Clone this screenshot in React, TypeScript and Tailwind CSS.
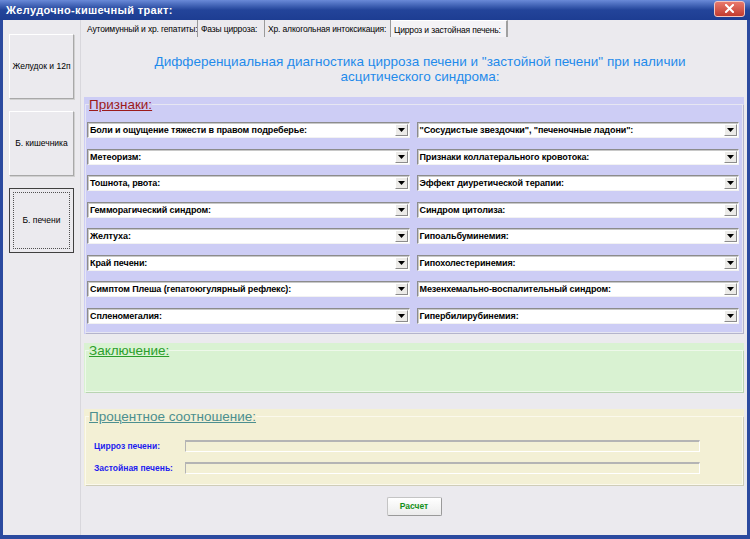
import React from 'react';

const leftSigns = [
  'Боли и ощущение тяжести в правом подреберье:',
  'Метеоризм:',
  'Тошнота, рвота:',
  'Гемморагический синдром:',
  'Желтуха:',
  'Край печени:',
  'Симптом Плеша (гепатоюгулярный рефлекс):',
  'Спленомегалия:',
];

const rightSigns = [
  '"Сосудистые звездочки", "печеночные ладони":',
  'Признаки коллатерального кровотока:',
  'Эффект диуретической терапии:',
  'Синдром цитолиза:',
  'Гипоальбуминемия:',
  'Гипохолестеринемия:',
  'Мезенхемально-воспалительный синдром:',
  'Гипербилирубинемия:',
];

const tabs = [
  { label: 'Аутоимунный и хр. гепатиты:', w: 'w-[114px]' },
  { label: 'Фазы цирроза:', w: 'w-[67px]' },
  { label: 'Хр. алкогольная интоксикация:', w: 'w-[126px]' },
  { label: 'Цирроз и застойная печень:', w: 'w-[117px]', active: true },
];

const Combo: React.FC<{ text: string }> = ({ text }) => (
  <div className="flex h-[16px] items-stretch bg-white border-t border-l border-t-[#8c8c8c] border-l-[#8c8c8c] border-r border-b border-r-[#f2f2f2] border-b-[#f2f2f2] shadow-[inset_1px_1px_0_#c8c8c8]">
    <span className="flex-1 truncate pl-[2px] text-[9px] leading-[14px] font-bold tracking-[-0.1px] text-black">{text}</span>
    <span className="m-[1px] flex w-[13px] items-center justify-center bg-[#ecebe8] border border-t-white border-l-white border-r-[#8c8c8c] border-b-[#8c8c8c]">
      <svg width="7" height="4" viewBox="0 0 7 4">
        <path d="M0 0h7L3.5 4z" fill="#000" />
      </svg>
    </span>
  </div>
);

const SideButton: React.FC<{ label: string; active?: boolean }> = ({ label, active }) =>
  active ? (
    <button className="h-[65px] w-[65px] border border-[#404040] bg-[#ebeaee] p-[3px] text-[8.5px] text-black">
      <span className="flex h-full w-full items-center justify-center border border-dotted border-[#505050]">{label}</span>
    </button>
  ) : (
    <button className="h-[65px] w-[65px] whitespace-nowrap border border-t-white border-l-white border-r-[#a8a8a8] border-b-[#a8a8a8] bg-[#ebeaee] text-[8.5px] text-black shadow-[1px_1px_0_#d0d0d0]">
      {label}
    </button>
  );

export default function App() {
  return (
    <div className="flex h-[539px] w-[750px] flex-col overflow-hidden bg-[#2b4a9f] font-['Liberation_Sans',Arial,sans-serif]">
      {/* title bar */}
      <div className="flex h-[20px] shrink-0 items-center justify-between bg-gradient-to-b from-[#6a8ad8] via-[#23449a] to-[#1d3d92] pl-[6px] pr-[5px]">
        <span className="text-[11px] font-bold tracking-[0.35px] text-white">Желудочно-кишечный тракт:</span>
        <span className="mb-[3px] flex h-[16px] w-[31px] items-center justify-center rounded-[3px] border border-[#f3c6c0] bg-gradient-to-b from-[#e8786c] to-[#c23a2e]">
          <svg width="9" height="9" viewBox="0 0 9 9">
            <path d="M1 1l7 7M8 1l-7 7" stroke="#fff" strokeWidth="2" strokeLinecap="square" />
          </svg>
        </span>
      </div>

      <div className="flex min-h-0 flex-1 pl-[3px] pr-[3px] pb-[4px]">
        <div className="flex flex-1 bg-[#ebeaee]">
          {/* left navigation */}
          <div className="flex w-[77px] flex-col gap-[12px] border-l-[5px] border-l-[#ebeaee] pt-[14px] pl-[1px]">
            <SideButton label="Желудок и 12п" />
            <SideButton label="Б. кишечника" />
            <SideButton label="Б. печени" active />
          </div>

          {/* tab control */}
          <div className="flex flex-1 flex-col border-l border-l-[#d8d7dc]">
            <div className="flex h-[17px] items-end pl-[3px]">
              {tabs.map((t) => (
                <div
                  key={t.label}
                  className={`${t.w} flex h-[17px] items-center overflow-hidden whitespace-nowrap pl-[3px] pt-[2px] text-[8.5px] tracking-[-0.15px] text-black ${
                    t.active
                      ? 'bg-[#f4f3f6] border-t border-t-white border-r-2 border-r-[#a0a0a0]'
                      : 'border-r border-r-[#9a9a9a]'
                  }`}
                >
                  {t.label}
                </div>
              ))}
            </div>

            <div className="flex flex-1 flex-col pl-[3px] pr-[3px]">
              <h1 className="mt-[17px] pl-[12px] text-center text-[13.5px] leading-[15px] text-[#1f8aeb]">
                Дифференциальная диагностика цирроза печени и "застойной печени" при наличии
                <br />
                асцитического синдрома:
              </h1>

              {/* signs */}
              <div className="mt-[13px] h-[237px] bg-[#cdcdf5] px-[1px] pb-[1px]">
                <fieldset className="h-full border border-[#e6e6f2] shadow-[1px_1px_0_#b4b4cc]">
                  <legend className="ml-[3px] text-[13.5px] leading-[15px] text-[#9c1b1b] underline">Признаки:</legend>
                  <div className="grid grid-cols-2 gap-x-[7px] gap-y-[10.5px] pt-[10px] pl-[1px] pr-[3px]">
                    {leftSigns.map((s, i) => (
                      <React.Fragment key={s}>
                        <Combo text={s} />
                        <Combo text={rightSigns[i]} />
                      </React.Fragment>
                    ))}
                  </div>
                </fieldset>
              </div>

              {/* conclusion */}
              <div className="mt-[9px] h-[50px] bg-[#d9f2d2] px-[1px] pb-[1px]">
                <fieldset className="h-full border border-[#eef8ea] shadow-[1px_1px_0_#b9d4b2]">
                  <legend className="ml-[3px] text-[13.5px] leading-[15px] text-[#2b9f2b] underline">Заключение:</legend>
                </fieldset>
              </div>

              {/* percentages */}
              <div className="mt-[16px] h-[77px] bg-[#f3f0d5] px-[1px] pb-[1px]">
                <fieldset className="h-full border border-[#fbf9ec] shadow-[1px_1px_0_#cfcdb8]">
                  <legend className="ml-[3px] text-[13.5px] leading-[15px] text-[#4c8f8f] underline">Процентное соотношение:</legend>
                  <div className="flex flex-col gap-[10px] pt-[16px] pl-[8px]">
                    {['Цирроз печени:', 'Застойная печень:'].map((l) => (
                      <div key={l} className="flex h-[12px] items-center">
                        <span className="w-[91px] whitespace-nowrap text-[8.5px] font-bold text-[#1c1cf0]">{l}</span>
                        <span className="h-[12px] w-[515px] border-t-2 border-l border-t-[#b4b4b4] border-l-[#b4b4b4] border-b border-r border-b-white border-r-white" />
                      </div>
                    ))}
                  </div>
                </fieldset>
              </div>

              <div className="mt-[11px] flex justify-center">
                <button className="h-[19px] w-[55px] rounded-[2px] border border-[#c4c4c4] border-b-[#9a9a9a] border-r-[#9a9a9a] bg-gradient-to-b from-white to-[#ececec] text-[8.5px] font-bold text-[#14901a]">
                  Расчет
                </button>
              </div>
            </div>
          </div>
        </div>
      </div>
    </div>
  );
}
